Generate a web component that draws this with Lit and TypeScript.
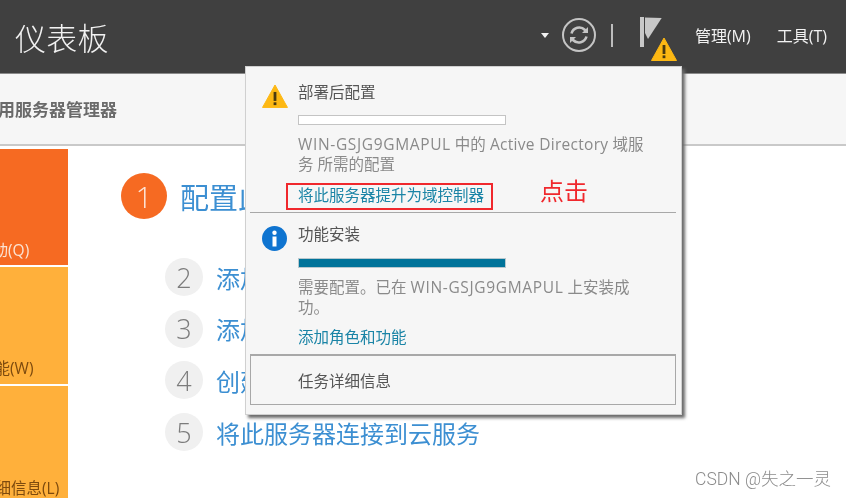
import { LitElement, html, css } from 'lit';
import { customElement } from 'lit/decorators.js';

const warnIcon = (size: number) => html`<svg width=${size} height=${size * 0.92} viewBox="0 0 26 24">
	<path d="M13 1 25.5 23.5H.5Z" fill="#fdb813" stroke="#fdb813" stroke-linejoin="round"/>
	<rect x="11.6" y="8" width="2.8" height="9" fill="#4a3a10"/>
	<rect x="11.6" y="18.4" width="2.8" height="2.8" fill="#4a3a10"/>
</svg>`;

@customElement('app-root')
export class AppRoot extends LitElement {
	static styles = css`
		:host {
			display: block;
			position: relative;
			width: 846px;
			height: 498px;
			overflow: hidden;
			background: #fff;
			font-family: 'Open Sans', 'Noto Sans CJK SC', sans-serif;
			filter: blur(0.55px);
		}

		.topbar {
			display: flex;
			align-items: center;
			height: 74px;
			background: #404040;
			border-bottom: 1px solid #8a8a8a;
			box-sizing: border-box;
			padding-left: 15px;
			padding-right: 19px;
		}

		.title {
			flex: 1;
			color: #f2f2f2;
			font-size: 31px;
			font-weight: 300;
			letter-spacing: 0.3px;
		}

		.tools {
			display: flex;
			align-items: center;
			height: 100%;
			box-sizing: border-box;
			padding-bottom: 3px;
		}

		.caret {
			width: 0;
			height: 0;
			border: 4.5px solid transparent;
			border-top: 5px solid #f2f2f2;
			border-bottom: 0;
			margin-right: 12px;
		}

		.sync {
			margin-right: 14px;
		}

		.sep {
			width: 2px;
			height: 23px;
			background: #bdbdbd;
			margin-right: 27px;
		}

		.flag {
			position: relative;
			align-self: flex-start;
			width: 40px;
			height: 70px;
			margin-right: 15px;
		}

		.flag svg {
			position: absolute;
		}

		.flag .pole {
			left: 0;
			top: 15px;
		}

		.flag .warn {
			left: 11px;
			top: 37px;
		}

		.menu {
			color: #f2f2f2;
			font-size: 16px;
			margin-left: 26px;
		}

		.flag + .menu {
			margin-left: 0;
		}

		.subbar {
			height: 72px;
			box-sizing: border-box;
			background: #f6f6f6;
			border-bottom: 2px solid #c9c9c9;
			display: flex;
			align-items: center;
			color: #6a6a6a;
			font-size: 17px;
			font-weight: 700;
			padding-bottom: 1px;
			overflow: hidden;
		}

		.subbar span {
			margin-left: -53px;
			white-space: nowrap;
		}

		.main {
			display: flex;
			padding-top: 3px;
		}

		.tiles {
			width: 68px;
			flex: none;
			display: flex;
			flex-direction: column;
			gap: 2px;
			overflow: hidden;
		}

		.tile {
			display: flex;
			align-items: flex-end;
			box-sizing: border-box;
			font-size: 15.5px;
			white-space: nowrap;
			background: #ffb03b;
			color: #7d4a0e;
		}

		.tile span {
			display: block;
		}

		.tile.quick {
			height: 116px;
			background: #f66a22;
			color: #fbe3d3;
			padding-bottom: 4px;
		}

		.tile.quick span {
			margin-left: -54px;
		}

		.tile.news {
			height: 117px;
			padding-bottom: 5px;
		}

		.tile.news span {
			margin-left: -52px;
		}

		.tile.learn {
			height: 113px;
			padding-bottom: 0;
		}

		.tile.learn span {
			margin-left: -51px;
		}

		.steps {
			flex: 1;
			padding-top: 24px;
			padding-left: 53px;
			display: flex;
			flex-direction: column;
		}

		.lead,
		.step {
			display: flex;
			align-items: center;
			color: #3c8fd2;
			white-space: nowrap;
		}

		.lead {
			font-size: 29px;
			gap: 13px;
			height: 46px;
			margin-bottom: 39px;
		}

		.lead .num {
			width: 46px;
			height: 46px;
			border-radius: 50%;
			background: #f66a22;
			color: #fde6d8;
			font-size: 30px;
			font-weight: 300;
			display: flex;
			align-items: center;
			justify-content: center;
		}

		.list {
			padding-left: 44px;
			display: flex;
			flex-direction: column;
			gap: 13.7px;
		}

		.step {
			font-size: 24px;
			gap: 13px;
			height: 38px;
		}

		.step .num {
			width: 38px;
			height: 38px;
			border-radius: 50%;
			background: #f0f0f0;
			color: #7c7c7c;
			font-size: 27px;
			font-weight: 300;
			display: flex;
			align-items: center;
			justify-content: center;
		}

		.popup {
			position: absolute;
			left: 245px;
			top: 66px;
			width: 437px;
			height: 349px;
			box-sizing: border-box;
			background: #f6f6f6;
			border: 1px solid #d0d0d0;
			box-shadow: 3px 3px 3px #6a6a6a;
			padding: 0 5px 9px 4px;
			display: flex;
			flex-direction: column;
		}

		.task {
			display: grid;
			grid-template-columns: 36px 1fr;
			padding-left: 12px;
			padding-right: 24px;
		}

		.task.first {
			height: 145px;
			padding-top: 14px;
			box-sizing: border-box;
		}

		.task.second {
			flex: 1;
			padding-top: 10px;
		}

		.icon {
			padding-top: 3px;
		}

		.body {
			display: flex;
			flex-direction: column;
			min-width: 0;
		}

		.name {
			font-size: 15.5px;
			line-height: 22px;
			color: #555;
		}

		.bar {
			width: 208px;
			height: 10px;
			box-sizing: border-box;
			border: 1px solid #c4c4c4;
			background: #fff;
			margin-top: 12px;
		}

		.bar.done {
			background: #00739a;
			border-color: #b8c8ce;
			margin-top: 13px;
		}

		.text {
			font-size: 15.5px;
			line-height: 20px;
			color: #8a8a8a;
			margin-top: 9px;
		}

		/* the host name and product name run wider than Open Sans in the original font */
		.host {
			letter-spacing: 0.65px;
		}

		.product {
			letter-spacing: 0.3px;
		}

		.link {
			font-size: 15.5px;
			line-height: 20px;
			color: #1a84a6;
		}

		.task.first .link {
			margin-top: 11px;
		}

		.task.second .link {
			margin-top: 10px;
		}

		.rule {
			height: 1px;
			background: #a8a8a8;
			flex: none;
		}

		.details {
			height: 51px;
			flex: none;
			box-sizing: border-box;
			border: 2px solid #a8a8a8;
			border-width: 2px 1px 1px 1px;
			display: flex;
			align-items: center;
			padding-left: 47px;
			font-size: 15.5px;
			color: #555;
		}

		.mark {
			position: absolute;
			left: 286px;
			top: 183px;
			width: 207px;
			height: 27px;
			box-sizing: border-box;
			border: 2px solid #f0282d;
		}

		.click {
			position: absolute;
			left: 540px;
			top: 172px;
			font-size: 24px;
			color: #f0282d;
		}

		.watermark {
			position: absolute;
			right: 15px;
			top: 465px;
			font-size: 17.5px;
			color: #8c8c8c;
			font-family: 'Roboto', 'Noto Sans CJK SC', sans-serif;
			font-weight: 300;
		}
	`;

	render() {
		return html`
			<div class="topbar">
				<div class="title">仪表板</div>
				<div class="tools">
					<div class="caret"></div>
					<svg class="sync" width="36" height="36" viewBox="0 0 36 36" fill="none" stroke="#c4c4c4">
						<circle cx="18" cy="18" r="16" stroke-width="2"/>
						<path d="M10.5 16.5a8 8 0 0 1 13.5-3.5l1.5 1.5" stroke-width="2.6"/>
						<path d="M27 10v6h-6" fill="#c4c4c4" stroke="none"/>
						<path d="M25.5 19.5a8 8 0 0 1-13.5 3.5l-1.5-1.5" stroke-width="2.6"/>
						<path d="M9 26v-6h6" fill="#c4c4c4" stroke="none"/>
					</svg>
					<div class="sep"></div>
					<div class="flag">
						<svg class="pole" width="24" height="34" viewBox="0 0 24 34">
							<rect x="0" y="2" width="4" height="30" fill="#c8c8c8"/>
							<path d="M5 2.5 21.7 3 8 24 5 18Z" fill="#c8c8c8"/>
						</svg>
						<svg class="warn" width="26" height="24" viewBox="0 0 26 24">
							<path d="M13 1 25.5 23.5H.5Z" fill="#fdb813" stroke="#fdb813" stroke-linejoin="round"/>
							<rect x="11.6" y="8" width="2.8" height="9" fill="#4a3a10"/>
							<rect x="11.6" y="18.4" width="2.8" height="2.8" fill="#4a3a10"/>
						</svg>
					</div>
					<div class="menu">管理(M)</div>
					<div class="menu">工具(T)</div>
				</div>
			</div>
			<div class="subbar"><span>欢迎使用服务器管理器</span></div>
			<div class="main">
				<div class="tiles">
					<div class="tile quick"><span>快速启动(Q)</span></div>
					<div class="tile news"><span>新增功能(W)</span></div>
					<div class="tile learn"><span>了解详细信息(L)</span></div>
				</div>
				<div class="steps">
					<div class="lead"><span class="num">1</span>配置此本地服务器</div>
					<div class="list">
						<div class="step"><span class="num">2</span>添加角色和功能</div>
						<div class="step"><span class="num">3</span>添加要管理的其他服务器</div>
						<div class="step"><span class="num">4</span>创建服务器组</div>
						<div class="step"><span class="num">5</span>将此服务器连接到云服务</div>
					</div>
				</div>
			</div>

			<div class="popup">
				<div class="task first">
					<div class="icon">${warnIcon(26)}</div>
					<div class="body">
						<div class="name">部署后配置</div>
						<div class="bar"></div>
						<div class="text"><span class="host">WIN-GSJG9GMAPUL</span> 中的 <span class="product">Active Directory</span> 域服务 所需的配置</div>
						<div class="link">将此服务器提升为域控制器</div>
					</div>
				</div>
				<div class="rule"></div>
				<div class="task second">
					<div class="icon">
						<svg width="25" height="25" viewBox="0 0 25 25">
							<circle cx="12.5" cy="12.5" r="12.5" fill="#0f74d0"/>
							<circle cx="12.5" cy="6.8" r="2.2" fill="#fff"/>
							<rect x="10.5" y="10.5" width="4" height="10" fill="#fff"/>
						</svg>
					</div>
					<div class="body">
						<div class="name">功能安装</div>
						<div class="bar done"></div>
						<div class="text">需要配置。已在 <span class="host">WIN-GSJG9GMAPUL</span> 上安装成功。</div>
						<div class="link">添加角色和功能</div>
					</div>
				</div>
				<div class="details">任务详细信息</div>
			</div>

			<div class="mark"></div>
			<div class="click">点击</div>
			<div class="watermark">CSDN @失之一灵</div>
		`;
	}
}
